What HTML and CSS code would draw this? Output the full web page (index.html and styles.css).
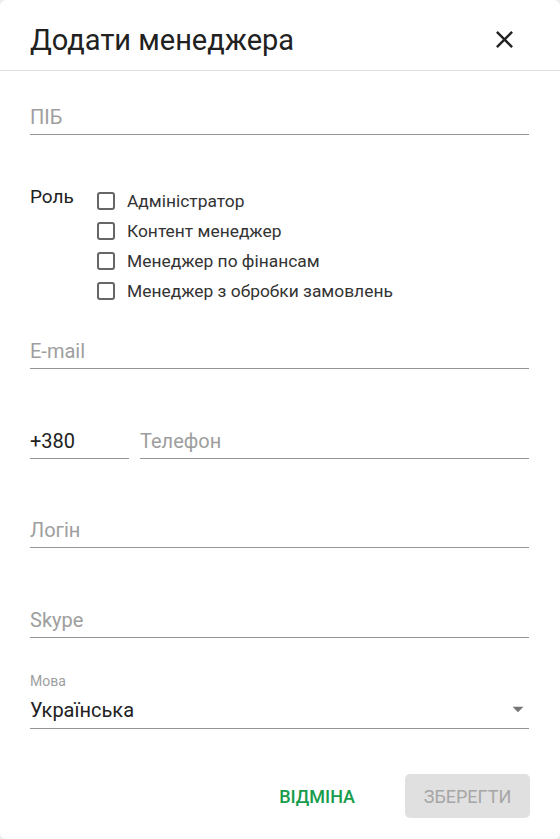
FILE: index.html
```html
<!DOCTYPE html>
<html lang="uk">
<head>
    <meta charset="UTF-8">
    <meta name="viewport" content="width=device-width, initial-scale=1.0">
    <title>Додати менеджера</title>
    <link rel="stylesheet" href="styles.css">
</head>
<body>
    <div class="dialog">
        <header class="dialog-header">
            <h1>Додати менеджера</h1>
            <button class="close" aria-label="Закрити">
                <svg viewBox="0 0 24 24" width="29" height="29"><path d="M19 6.41L17.59 5 12 10.59 6.41 5 5 6.41 10.59 12 5 17.59 6.41 19 12 13.41 17.59 19 19 17.59 13.41 12z"/></svg>
            </button>
        </header>

        <form class="dialog-body">
            <div class="field first">
                <span class="placeholder">ПІБ</span>
            </div>

            <div class="roles">
                <div class="roles-label">Роль</div>
                <ul class="roles-list">
                    <li><span class="checkbox"></span>Адміністратор</li>
                    <li><span class="checkbox"></span>Контент менеджер</li>
                    <li><span class="checkbox"></span>Менеджер по фінансам</li>
                    <li><span class="checkbox"></span>Менеджер з обробки замовлень</li>
                </ul>
            </div>

            <div class="field email">
                <span class="placeholder">E-mail</span>
            </div>

            <div class="phone-row">
                <div class="field code">+380</div>
                <div class="field phone"><span class="placeholder">Телефон</span></div>
            </div>

            <div class="field login">
                <span class="placeholder">Логін</span>
            </div>

            <div class="field">
                <span class="placeholder">Skype</span>
            </div>

            <div class="select-label">Мова</div>
            <div class="field select">
                <span>Українська</span>
                <svg viewBox="0 0 24 24" width="26" height="26"><path d="M7 10l5 5 5-5z"/></svg>
            </div>
        </form>

        <footer class="dialog-footer">
            <button class="btn-cancel">Відміна</button>
            <button class="btn-save" disabled>Зберегти</button>
        </footer>
    </div>
</body>
</html>
```

FILE: styles.css
```css
body {
    margin: 0;
    padding: 0;
    background-color: #ececec;
    font-family: Roboto, "Noto Sans", sans-serif;
    color: #212121;
}

.dialog {
    width: 560px;
    height: 839px;
    background-color: #fff;
    border-radius: 6px;
    box-sizing: border-box;
}

.dialog-header {
    display: flex;
    justify-content: space-between;
    align-items: center;
    height: 71px;
    padding: 9px 30px 0 30px;
    box-sizing: border-box;
    border-bottom: 1px solid #e0e0e0;
}

.dialog-header h1 {
    margin: 0;
    font-size: 29px;
    font-weight: 400;
    line-height: 36px;
    color: #212121;
}

.close {
    border: none;
    background: none;
    padding: 0;
    margin: -1px 11px 0 0;
    display: flex;
    cursor: pointer;
}

.close svg {
    fill: #222;
}

.dialog-body {
    display: flex;
    flex-direction: column;
    padding: 0 31px 0 30px;
}

.field {
    border-bottom: 1px solid #949494;
    padding: 3px 0 6px;
    font-size: 20px;
    line-height: 22px;
    color: #212121;
    margin-top: 58px;
}

.field.first {
    margin-top: 32px;
}

.field.login {
    margin-top: 57px;
}

.placeholder {
    color: #9e9e9e;
}

.roles {
    display: flex;
    margin-top: 51px;
}

.roles-label {
    width: 66px;
    font-size: 19px;
    line-height: 22px;
    color: #212121;
}

.roles-list {
    list-style: none;
    margin: 0;
    padding: 0;
}

.roles-list li {
    display: flex;
    align-items: center;
    height: 30px;
    font-size: 17.4px;
    color: #333;
}

.checkbox {
    width: 18px;
    height: 18px;
    box-sizing: border-box;
    border: 2px solid #666;
    border-radius: 3px;
    margin: 0 12px 0 1px;
}

.field.email {
    margin-top: 31px;
}

.phone-row {
    display: flex;
    gap: 11px;
    margin-top: 58px;
}

.phone-row .field {
    margin-top: 0;
}

.field.code {
    width: 99px;
}

.field.phone {
    flex: 1;
}

.select-label {
    margin-top: 35px;
    font-size: 14px;
    line-height: 16px;
    color: #9e9e9e;
}

.field.select {
    margin-top: 6px;
    display: flex;
    justify-content: space-between;
    align-items: center;
}

.field.select svg {
    fill: #757575;
    margin: -2px -2px 0 0;
}

.dialog-footer {
    display: flex;
    justify-content: flex-end;
    align-items: center;
    gap: 34px;
    padding: 45px 30px 0 0;
}

.dialog-footer button {
    font-family: Roboto, "Noto Sans", sans-serif;
    font-size: 18px;
    text-transform: uppercase;
    border: none;
    border-radius: 5px;
    height: 44px;
}

.btn-cancel {
    background: none;
    color: #179c4c;
    font-weight: 500;
    padding: 0 16px;
    cursor: pointer;
}

.btn-save {
    background-color: #e0e0e0;
    color: #a6a6a6;
    font-size: 17.5px;
    width: 125px;
    padding: 0;
}
```
